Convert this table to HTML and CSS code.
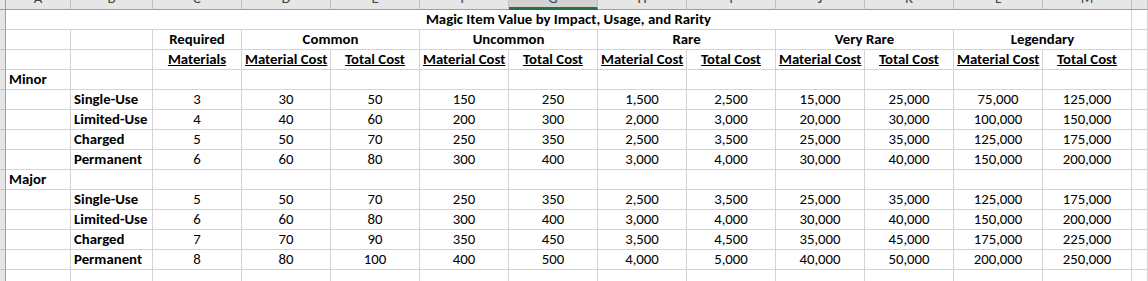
FILE: index.html
```html
<!DOCTYPE html>
<html>
<head>
<meta charset="utf-8">
<link rel="stylesheet" href="styles.css">
<title>Magic Item Value</title>
</head>
<body>
<div class="sheet">
  <div class="ch corner"></div>
  <div class="ch">A</div><div class="ch">B</div><div class="ch">C</div><div class="ch">D</div><div class="ch">E</div><div class="ch">F</div><div class="ch sel">G</div><div class="ch">H</div><div class="ch">I</div><div class="ch">J</div><div class="ch">K</div><div class="ch">L</div><div class="ch">M</div><div class="ch"></div>

  <div class="rh"></div>
  <div class="c b ctr span13">Magic Item Value by Impact, Usage, and Rarity</div>
  <div class="c"></div>

  <div class="rh"></div>
  <div class="c"></div><div class="c"></div>
  <div class="c b ctr">Required</div>
  <div class="c b ctr span2">Common</div>
  <div class="c b ctr span2">Uncommon</div>
  <div class="c b ctr span2">Rare</div>
  <div class="c b ctr span2">Very Rare</div>
  <div class="c b ctr span2">Legendary</div>
  <div class="c"></div>

  <div class="rh"></div>
  <div class="c"></div><div class="c"></div>
  <div class="c b ctr"><u>Materials</u></div>
  <div class="c b ctr"><u>Material Cost</u></div><div class="c b ctr"><u>Total Cost</u></div>
  <div class="c b ctr"><u>Material Cost</u></div><div class="c b ctr"><u>Total Cost</u></div>
  <div class="c b ctr"><u>Material Cost</u></div><div class="c b ctr"><u>Total Cost</u></div>
  <div class="c b ctr"><u>Material Cost</u></div><div class="c b ctr"><u>Total Cost</u></div>
  <div class="c b ctr"><u>Material Cost</u></div><div class="c b ctr"><u>Total Cost</u></div>
  <div class="c"></div>

  <div class="rh"></div>
  <div class="c b">Minor</div>
  <div class="c"></div><div class="c"></div><div class="c"></div><div class="c"></div><div class="c"></div><div class="c"></div><div class="c"></div><div class="c"></div><div class="c"></div><div class="c"></div><div class="c"></div><div class="c"></div><div class="c"></div>

  <div class="rh"></div><div class="c"></div><div class="c b">Single-Use</div>
  <div class="c ctr">3</div><div class="c ctr">30</div><div class="c ctr">50</div><div class="c ctr">150</div><div class="c ctr">250</div><div class="c ctr">1,500</div><div class="c ctr">2,500</div><div class="c ctr">15,000</div><div class="c ctr">25,000</div><div class="c ctr">75,000</div><div class="c ctr">125,000</div><div class="c"></div>

  <div class="rh"></div><div class="c"></div><div class="c b">Limited-Use</div>
  <div class="c ctr">4</div><div class="c ctr">40</div><div class="c ctr">60</div><div class="c ctr">200</div><div class="c ctr">300</div><div class="c ctr">2,000</div><div class="c ctr">3,000</div><div class="c ctr">20,000</div><div class="c ctr">30,000</div><div class="c ctr">100,000</div><div class="c ctr">150,000</div><div class="c"></div>

  <div class="rh"></div><div class="c"></div><div class="c b">Charged</div>
  <div class="c ctr">5</div><div class="c ctr">50</div><div class="c ctr">70</div><div class="c ctr">250</div><div class="c ctr">350</div><div class="c ctr">2,500</div><div class="c ctr">3,500</div><div class="c ctr">25,000</div><div class="c ctr">35,000</div><div class="c ctr">125,000</div><div class="c ctr">175,000</div><div class="c"></div>

  <div class="rh"></div><div class="c"></div><div class="c b">Permanent</div>
  <div class="c ctr">6</div><div class="c ctr">60</div><div class="c ctr">80</div><div class="c ctr">300</div><div class="c ctr">400</div><div class="c ctr">3,000</div><div class="c ctr">4,000</div><div class="c ctr">30,000</div><div class="c ctr">40,000</div><div class="c ctr">150,000</div><div class="c ctr">200,000</div><div class="c"></div>

  <div class="rh"></div>
  <div class="c b">Major</div>
  <div class="c"></div><div class="c"></div><div class="c"></div><div class="c"></div><div class="c"></div><div class="c"></div><div class="c"></div><div class="c"></div><div class="c"></div><div class="c"></div><div class="c"></div><div class="c"></div><div class="c"></div>

  <div class="rh"></div><div class="c"></div><div class="c b">Single-Use</div>
  <div class="c ctr">5</div><div class="c ctr">50</div><div class="c ctr">70</div><div class="c ctr">250</div><div class="c ctr">350</div><div class="c ctr">2,500</div><div class="c ctr">3,500</div><div class="c ctr">25,000</div><div class="c ctr">35,000</div><div class="c ctr">125,000</div><div class="c ctr">175,000</div><div class="c"></div>

  <div class="rh"></div><div class="c"></div><div class="c b">Limited-Use</div>
  <div class="c ctr">6</div><div class="c ctr">60</div><div class="c ctr">80</div><div class="c ctr">300</div><div class="c ctr">400</div><div class="c ctr">3,000</div><div class="c ctr">4,000</div><div class="c ctr">30,000</div><div class="c ctr">40,000</div><div class="c ctr">150,000</div><div class="c ctr">200,000</div><div class="c"></div>

  <div class="rh"></div><div class="c"></div><div class="c b">Charged</div>
  <div class="c ctr">7</div><div class="c ctr">70</div><div class="c ctr">90</div><div class="c ctr">350</div><div class="c ctr">450</div><div class="c ctr">3,500</div><div class="c ctr">4,500</div><div class="c ctr">35,000</div><div class="c ctr">45,000</div><div class="c ctr">175,000</div><div class="c ctr">225,000</div><div class="c"></div>

  <div class="rh"></div><div class="c"></div><div class="c b">Permanent</div>
  <div class="c ctr">8</div><div class="c ctr">80</div><div class="c ctr">100</div><div class="c ctr">400</div><div class="c ctr">500</div><div class="c ctr">4,000</div><div class="c ctr">5,000</div><div class="c ctr">40,000</div><div class="c ctr">50,000</div><div class="c ctr">200,000</div><div class="c ctr">250,000</div><div class="c"></div>

  <div class="rh"></div>
  <div class="c"></div><div class="c"></div><div class="c"></div><div class="c"></div><div class="c"></div><div class="c"></div><div class="c"></div><div class="c"></div><div class="c"></div><div class="c"></div><div class="c"></div><div class="c"></div><div class="c"></div><div class="c"></div>
</div>
</body>
</html>
```
FILE: styles.css
```css
html, body {
  margin: 0;
  padding: 0;
  background: #ffffff;
  overflow: hidden;
  height: 281px;
}
.sheet {
  display: grid;
  grid-template-columns: 6px 65px 82px repeat(11, 89px) 1fr;
  grid-auto-rows: 20px;
  margin-top: -10px;
  font-family: Calibri, Carlito, Lato, "Open Sans", sans-serif;
  font-size: 14.8px;
  color: #000000;
}
.ch {
  box-sizing: border-box;
  background: #e6e6e6;
  border-right: 1px solid #c0c0c0;
  border-bottom: 1px solid #9e9e9e;
  color: #444444;
  text-align: center;
  line-height: 17px;
  font-size: 14.8px;
  overflow: hidden;
}
.ch.corner {
  border-right: 1px solid #9e9e9e;
}
.ch.sel {
  background: #d2d2d2;
  border-bottom: 3px solid #217346;
}
.rh {
  box-sizing: border-box;
  background: #e6e6e6;
  border-right: 1px solid #9e9e9e;
  border-bottom: 1px solid #c0c0c0;
}
.c {
  box-sizing: border-box;
  border-right: 1px solid #d4d4d4;
  border-bottom: 1px solid #d4d4d4;
  line-height: 19px;
  padding: 0 3px;
  white-space: nowrap;
  overflow: hidden;
}
.b {
  font-weight: 700;
}
.ctr {
  text-align: center;
}
.span13 {
  grid-column: span 13;
}
.span2 {
  grid-column: span 2;
}
u {
  text-decoration-thickness: 1px;
  text-underline-offset: 1px;
}
```
